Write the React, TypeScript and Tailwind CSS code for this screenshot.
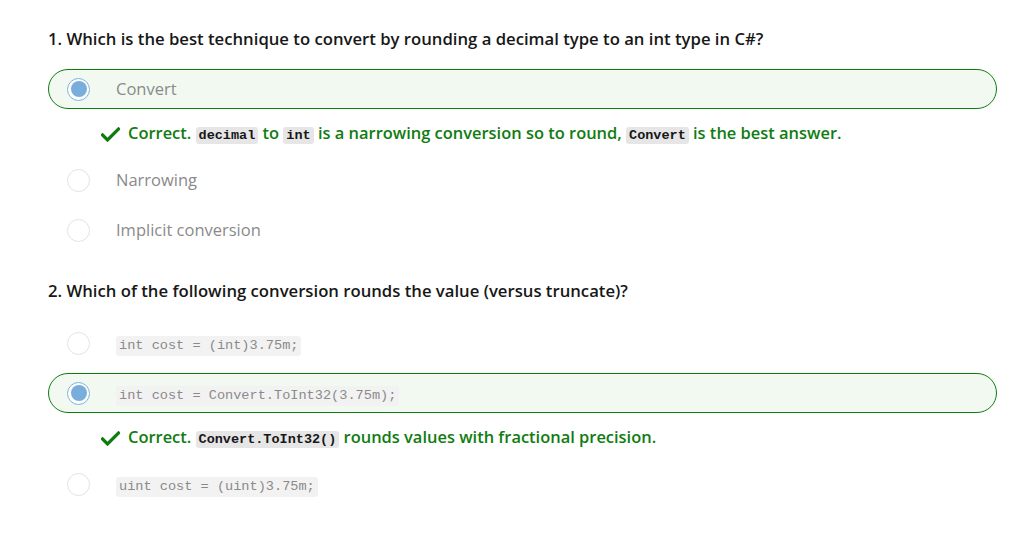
import React from 'react';

type Option = {
  label: string;
  code?: boolean;
  selected?: boolean;
  feedback?: React.ReactNode;
};

const Code = ({ children }: { children: React.ReactNode }) => (
  <code className="rounded-[3px] bg-[#e6e6e6] px-[3px] py-[1px] font-['Liberation_Mono',monospace] text-[13.5px] font-bold text-[#171717]">
    {children}
  </code>
);

const Check = () => (
  <svg width="19" height="15" viewBox="0 0 19 15" className="shrink-0">
    <path d="M1.5 8 L6.5 13 L17.5 2" fill="none" stroke="#107c10" strokeWidth="3.2" strokeLinecap="square" />
  </svg>
);

const Radio = ({ selected }: { selected?: boolean }) =>
  selected ? (
    <span className="flex h-[23px] w-[23px] items-center justify-center rounded-full border-[1.5px] border-[#7fb2de] bg-white">
      <span className="h-[16px] w-[16px] rounded-full bg-[#79aedb]" />
    </span>
  ) : (
    <span className="h-[23px] w-[23px] rounded-full border border-[#e3e3e3] bg-white" />
  );

const OptionRow = ({ opt }: { opt: Option }) => (
  <div>
    <div
      className={
        'flex h-[40px] items-center rounded-[20px] border pl-[18px] ' +
        (opt.selected ? 'border-[#107c10] bg-[#f1f9f1]' : 'border-transparent')
      }
    >
      <Radio selected={opt.selected} />
      <div className="ml-[26px]">
        {opt.code ? (
          <span className="inline-block rounded-[3px] bg-[#f2f2f2] px-[3px] font-['Liberation_Mono',monospace] text-[13.6px] leading-[20px] text-[#8a8a8a]">
            {opt.label}
          </span>
        ) : (
          <span className="text-[16.5px] text-[#8a8a8a]">{opt.label}</span>
        )}
      </div>
    </div>
    {opt.feedback && (
      <div className="mb-[2px] mt-[12px] flex items-center gap-[8px] pl-[53px] text-[16.45px] font-semibold leading-[24px] text-[#107c10]">
        <Check />
        <span>{opt.feedback}</span>
      </div>
    )}
  </div>
);

const q1: Option[] = [
  {
    label: 'Convert',
    selected: true,
    feedback: (
      <>
        Correct. <Code>decimal</Code> to <Code>int</Code> is a narrowing conversion so to round, <Code>Convert</Code> is the best answer.
      </>
    ),
  },
  { label: 'Narrowing' },
  { label: 'Implicit conversion' },
];

const q2: Option[] = [
  { label: 'int cost = (int)3.75m;', code: true },
  {
    label: 'int cost = Convert.ToInt32(3.75m);',
    code: true,
    selected: true,
    feedback: (
      <>
        Correct. <Code>Convert.ToInt32()</Code> rounds values with fractional precision.
      </>
    ),
  },
  { label: 'uint cost = (uint)3.75m;', code: true },
];

const Question = ({ title, options, gap }: { title: string; options: Option[]; gap: string }) => (
  <section>
    <h2 className="text-[16.7px] font-semibold leading-[24px] text-[#171717]">{title}</h2>
    <div className={'flex flex-col gap-[10px] ' + gap}>
      {options.map((o, i) => (
        <OptionRow key={i} opt={o} />
      ))}
    </div>
  </section>
);

export default function App() {
  return (
    <div className="min-h-screen bg-white pl-[48px] pr-[26px] pt-[27px] font-['Open_Sans',sans-serif]">
      <Question title="1. Which is the best technique to convert by rounding a decimal type to an int type in C#?" options={q1} gap="mt-[18px]" />
      <div className="mt-[29px]">
        <Question title="2. Which of the following conversion rounds the value (versus truncate)?" options={q2} gap="mt-[20px]" />
      </div>
    </div>
  );
}
